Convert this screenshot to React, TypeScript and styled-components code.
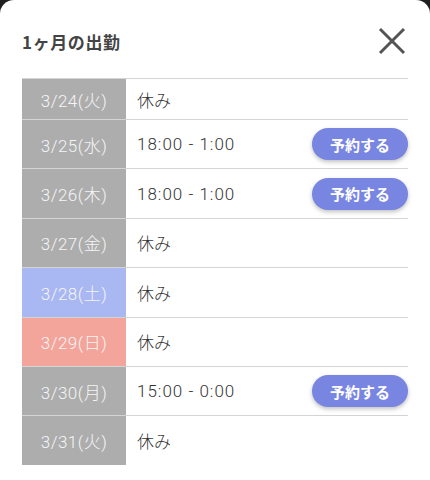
import styled, { createGlobalStyle } from "styled-components";

const GlobalStyle = createGlobalStyle`
    html, body {
        margin: 0;
        padding: 0;
        background: #1f1f1f;
    }
    body {
        font-family: "Noto Sans CJK JP", "Noto Sans", sans-serif;
    }
`;

const Sheet = styled.div`
    background: #fff;
    border-radius: 14px 14px 0 0;
    min-height: 480px;
    box-sizing: border-box;
    padding: 14px 22px 0;
`;

const Header = styled.header`
    height: 56px;
    margin-bottom: 8px;
    display: flex;
    align-items: center;
    justify-content: space-between;
`;

const Title = styled.h2`
    margin: 0 0 2px;
    font-size: 17px;
    font-weight: 700;
    color: #444;
    letter-spacing: 0.6px;
`;

const CloseButton = styled.button`
    border: none;
    background: none;
    padding: 0;
    margin: 0 2px 2px 0;
    width: 28px;
    height: 28px;
    display: flex;
    cursor: pointer;
`;

const Table = styled.div`
    display: flex;
    flex-direction: column;
`;

const Row = styled.div<{ $short?: boolean }>`
    display: grid;
    grid-template-columns: 104px 1fr;
    height: ${(p) => (p.$short ? "41px" : "49.4px")};
    border-top: 1px solid #d4d4d4;
    box-sizing: border-box;
    font-family: Roboto, "Noto Sans CJK JP", sans-serif;
    font-weight: 300;
`;

const dayColors = {
    weekday: "#adadad",
    sat: "#a9b8f3",
    sun: "#f3a59c",
};

type Day = keyof typeof dayColors;

const DateCell = styled.div<{ $day: Day }>`
    background: ${(p) => dayColors[p.$day]};
    color: #f5f5f5;
    font-size: 17px;
    letter-spacing: 0.5px;
    display: flex;
    align-items: center;
    justify-content: center;
`;

const Content = styled.div`
    display: flex;
    align-items: center;
    justify-content: space-between;
    padding-left: 11px;
    font-size: 17px;
    color: #333;
`;

const Hours = styled.span<{ $off?: boolean }>`
    letter-spacing: ${(p) => (p.$off ? "0" : "1px")};
`;

const ReserveButton = styled.button`
    border: none;
    background: #7886e2;
    color: #fff;
    font-family: "Noto Sans CJK JP", sans-serif;
    font-size: 15px;
    font-weight: 700;
    height: 32px;
    width: 96px;
    border-radius: 16px;
    box-shadow: 0 2px 4px rgba(0, 0, 0, 0.25);
    cursor: pointer;
`;

type Shift = { date: string; day: Day; time?: string };

const shifts: Shift[] = [
    { date: "3/24(火)", day: "weekday" },
    { date: "3/25(水)", day: "weekday", time: "18:00 - 1:00" },
    { date: "3/26(木)", day: "weekday", time: "18:00 - 1:00" },
    { date: "3/27(金)", day: "weekday" },
    { date: "3/28(土)", day: "sat" },
    { date: "3/29(日)", day: "sun" },
    { date: "3/30(月)", day: "weekday", time: "15:00 - 0:00" },
    { date: "3/31(火)", day: "weekday" },
];

function App() {
    return (
        <>
            <GlobalStyle />
            <Sheet>
                <Header>
                    <Title>1ヶ月の出勤</Title>
                    <CloseButton aria-label="閉じる">
                        <svg width="28" height="28" viewBox="0 0 28 28">
                            <path
                                d="M2 2 L26 26 M26 2 L2 26"
                                stroke="#555"
                                strokeWidth="3"
                            />
                        </svg>
                    </CloseButton>
                </Header>
                <Table>
                    {shifts.map((s, i) => (
                        <Row key={s.date} $short={i === 0}>
                            <DateCell $day={s.day}>{s.date}</DateCell>
                            <Content>
                                <Hours $off={!s.time}>{s.time ?? "休み"}</Hours>
                                {s.time && <ReserveButton>予約する</ReserveButton>}
                            </Content>
                        </Row>
                    ))}
                </Table>
            </Sheet>
        </>
    );
}

export default App;
